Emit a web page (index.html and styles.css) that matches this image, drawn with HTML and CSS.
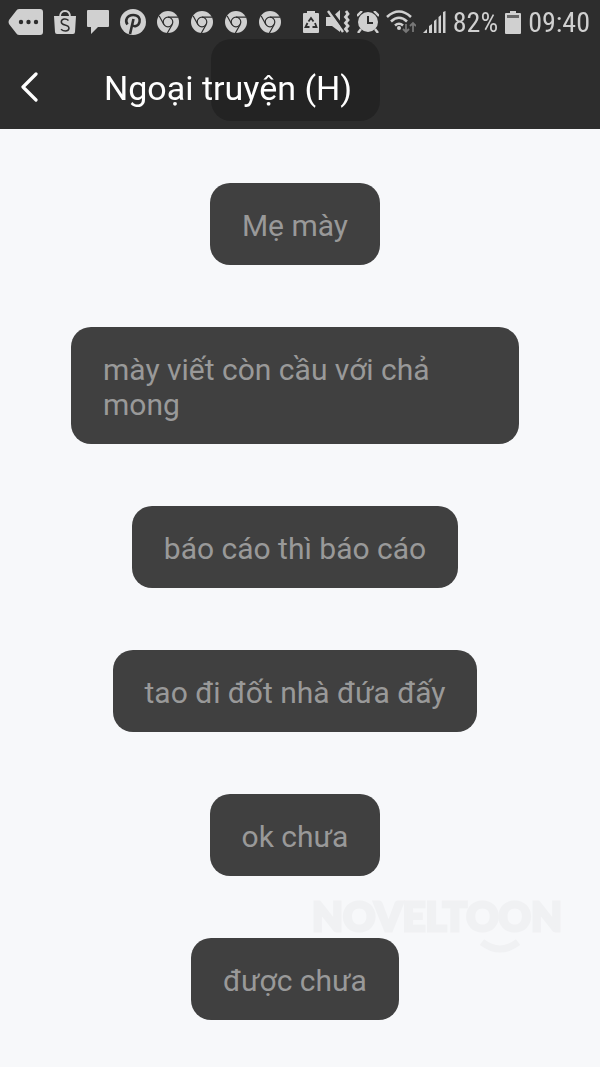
FILE: index.html
```html
<!DOCTYPE html>
<html lang="vi">
<head>
<meta charset="utf-8">
<meta name="viewport" content="width=device-width, initial-scale=1">
<title>Ngoại truyện (H)</title>
<link rel="stylesheet" href="styles.css">
</head>
<body>
<svg class="symbols" aria-hidden="true">
  <symbol id="chrome" viewBox="0 0 22 22">
    <circle cx="11" cy="11" r="11" fill="currentColor"/>
    <g fill="none" stroke="#2d2d2d" stroke-width="1.2">
      <circle cx="11" cy="11" r="4.800"/>
      <path d="M11 6.200H21M6.900 13.500L2.200 5M15.200 13.500L10.400 22"/>
    </g>
  </symbol>
</svg>

<header class="top">
  <div class="status">
    <div class="status-left">
      <svg viewBox="0 0 35 26" width="35" height="26"><path d="M11 0H32Q35 0 35 3V23Q35 26 32 26H11Q9 26 8 24L1 15Q0 13 1 11L8 2Q9 0 11 0Z" fill="currentColor"/><g fill="#2d2d2d"><circle cx="13" cy="13" r="2.200"/><circle cx="20.500" cy="13" r="2.200"/><circle cx="28" cy="13" r="2.200"/></g></svg>
      <svg viewBox="0 0 22 24" width="22" height="24"><path d="M0 6H22L21 22Q21 24 19 24H3Q1 24 1 22Z" fill="currentColor"/><path d="M6 7Q6 1 11 1T16 7" fill="none" stroke="currentColor" stroke-width="1.8"/><path d="M14.500 10.500Q12.500 8.500 10 9Q7.300 9.500 7.300 12Q7.300 14.200 11 15Q15 16 15 18.400Q14.500 21 11.500 21Q9 21 7 19.300" fill="none" stroke="#2d2d2d" stroke-width="1.500"/></svg>
      <svg viewBox="0 0 22 24" width="22" height="24"><path d="M1 0H21Q22 0 22 1V16Q22 17 21 17H11L4 24V17H1Q0 17 0 16V1Q0 0 1 0Z" fill="currentColor"/></svg>
      <svg viewBox="0 0 26 26" width="26" height="26"><circle cx="13" cy="13" r="13" fill="currentColor"/><path d="M7.500 15.500C4.500 11.500 7 6 13.200 6C18.500 6 20.500 9.500 19.500 13C18.500 17.500 13.500 18.500 12 15.500M13.500 10L10 25" fill="none" stroke="#2d2d2d" stroke-width="2.600"/></svg>
      <div class="apps">
        <svg width="22" height="22"><use href="#chrome"/></svg>
        <svg width="22" height="22"><use href="#chrome"/></svg>
        <svg width="22" height="22"><use href="#chrome"/></svg>
        <svg width="22" height="22"><use href="#chrome"/></svg>
      </div>
    </div>
    <div class="status-right">
      <svg viewBox="0 0 16 22" width="16" height="22"><path d="M4 2V0H12V2H15Q16 2 16 3V21Q16 22 15 22H1Q0 22 0 21V3Q0 2 1 2Z" fill="currentColor"/><path d="M5.500 10.500L8 7L10.500 10.500M12 12L13.500 16H9.500M6.500 16H2.500L4.500 12" fill="none" stroke="#2d2d2d" stroke-width="1.800"/></svg>
      <svg viewBox="0 0 24 24" width="24" height="24"><path d="M0 7H6L14 0V22L6 16H0Z" fill="currentColor"/><path d="M4 0L19 20" stroke="#2d2d2d" stroke-width="3"/><path d="M2 1L17 22" stroke="currentColor" stroke-width="2.400"/><path d="M20 1L22 4L19.500 7L22 10L19.500 13L22 16L19.500 19L22 22" fill="none" stroke="currentColor" stroke-width="2.800"/></svg>
      <svg viewBox="0 0 22 22" width="22" height="22"><circle cx="11" cy="11" r="10" fill="currentColor"/><path d="M0 5L5 0M17 0L22 5M4 18L1 22M18 18L21 22" stroke="currentColor" stroke-width="2.400"/><path d="M11 5V12H16" fill="none" stroke="#2d2d2d" stroke-width="2"/></svg>
      <svg viewBox="0 0 30 24" width="30" height="24"><g fill="none" stroke="currentColor" stroke-width="2.600"><path d="M1 7Q13 -4 25 7M5 11.500Q13 4 21 11.500M9 15.500Q13 12 17 15.500"/></g><circle cx="13" cy="18" r="2" fill="currentColor"/><path d="M20 14V22M17 19L20 22L23 19M27 22V13M24 16L27 13L30 16" fill="none" stroke="#777" stroke-width="1.800"/></svg>
      <svg viewBox="0 0 23 22" width="23" height="22"><path d="M0 22L4 18V22ZM6 15L9 13V22H6ZM11 10L13.500 8V22H11ZM15.500 6L18 4V22H15.500ZM20 1L22.500 0V22H20Z" fill="currentColor"/></svg>
      <span class="reading">82%</span>
      <svg viewBox="0 0 16 23" width="16" height="23"><path d="M5 2V0H11V2H15Q16 2 16 3V22Q16 23 15 23H1Q0 23 0 22V3Q0 2 1 2Z" fill="currentColor"/><path d="M2 4H14V7H2Z" fill="#666"/></svg>
      <time class="reading">09:40</time>
    </div>
  </div>
  <div class="bar">
    <button class="back" type="button" aria-label="Quay lại"><svg viewBox="0 0 18 30" width="18" height="30"><path d="M16 2L3 15L16 28" fill="none" stroke="currentColor" stroke-width="3.200" stroke-linecap="round" stroke-linejoin="round"/></svg></button>
    <h1 class="title">Ngoại truyện (H)</h1>
  </div>
</header>

<div class="watermark" aria-hidden="true">
  <span>NOVELTOON</span>
  <svg class="smile" viewBox="0 0 40 18" width="40" height="18"><path d="M2 5Q20 19 38 5" fill="none" stroke="currentColor" stroke-width="7"/></svg>
</div>

<main class="messages">
  <p class="bubble passed"></p>
  <p class="bubble">Mẹ mày</p>
  <p class="bubble">mày viết còn cầu với chả mong</p>
  <p class="bubble">báo cáo thì báo cáo</p>
  <p class="bubble">tao đi đốt nhà đứa đấy</p>
  <p class="bubble">ok chưa</p>
  <p class="bubble">được chưa</p>
</main>
</body>
</html>
```
FILE: styles.css
```css
* {
  box-sizing: border-box;
}

body {
  margin: 0;
  background: #f7f8fa;
  font-family: Roboto, "Noto Sans", sans-serif;
}

svg {
  display: block;
  flex: none;
}

.symbols {
  position: absolute;
  width: 0;
  height: 0;
}

.top {
  position: fixed;
  z-index: 2;
  top: 0;
  left: 0;
  right: 0;
  background: rgba(34, 34, 34, 0.95);
  color: #fff;
}

.status {
  display: flex;
  align-items: center;
  justify-content: space-between;
  height: 44px;
  padding: 0 10px 0 8px;
  color: #d0d0d0;
}

.status-left {
  display: flex;
  align-items: center;
  gap: 11px;
}

.apps {
  display: flex;
  gap: 12px;
}

.status-right {
  display: flex;
  align-items: center;
  gap: 7px;
}

.reading {
  padding-top: 2px;
  font-family: "Roboto Condensed", Roboto, sans-serif;
  font-size: 28px;
  line-height: 42px;
}

.bar {
  display: flex;
  align-items: center;
  height: 85px;
  padding-left: 20px;
}

.back {
  width: 84px;
  padding: 0;
  border: 0;
  background: none;
  color: inherit;
}

.title {
  margin: 0;
  padding-top: 3px;
  font-size: 34px;
  font-weight: 400;
  line-height: 48px;
}

.messages {
  display: flex;
  flex-direction: column;
  align-items: center;
  gap: 62px;
  padding: 39px 81px 48px 71px;
}

.bubble {
  position: relative;
  margin: 0;
  padding: 25px 32px 22px;
  border-radius: 20px;
  background: #404040;
  color: #999;
  font-size: 30px;
  line-height: 35px;
}

.passed {
  width: 169px;
  height: 82px;
}

.watermark {
  position: fixed;
  right: 38px;
  bottom: 112px;
  display: flex;
  flex-direction: column;
  color: #f0f1f3;
  font-family: Lato, sans-serif;
  font-size: 40px;
  font-weight: 900;
  line-height: 42px;
  -webkit-text-stroke: 3px #f0f1f3;
}

.smile {
  align-self: flex-end;
  margin-right: 42px;
}
```
